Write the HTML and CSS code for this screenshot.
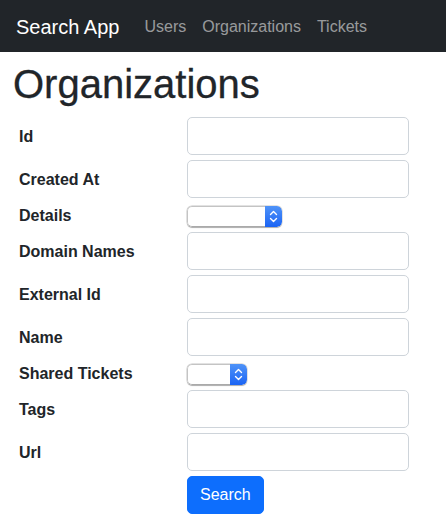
FILE: index.html
```html
<!DOCTYPE html>
<html lang="en">
<head>
<meta charset="utf-8">
<title>Search App</title>
<link rel="stylesheet" href="styles.css">
</head>
<body>
<nav class="navbar">
  <a class="brand" href="#">Search App</a>
  <ul class="nav">
    <li><a class="nav-link" href="#">Users</a></li>
    <li><a class="nav-link" href="#">Organizations</a></li>
    <li><a class="nav-link" href="#">Tickets</a></li>
  </ul>
</nav>
<main class="main">
  <h1 class="title">Organizations</h1>
  <form class="form">
    <label class="label" for="f-id">Id</label>
    <input class="input" id="f-id" type="text">

    <label class="label" for="f-created">Created At</label>
    <input class="input" id="f-created" type="text">

    <label class="label label-short" for="f-details">Details</label>
    <div class="select select-wide">
      <select class="select-field" id="f-details"><option></option></select>
      <span class="stepper"><svg width="9" height="13" viewBox="0 0 9 13"><path d="M1.5 4.5 L4.5 1.5 L7.5 4.5 M1.5 8.5 L4.5 11.5 L7.5 8.5" fill="none" stroke="#fff" stroke-width="1.4" stroke-linecap="round" stroke-linejoin="round"/></svg></span>
    </div>

    <label class="label" for="f-domain">Domain Names</label>
    <input class="input" id="f-domain" type="text">

    <label class="label" for="f-ext">External Id</label>
    <input class="input" id="f-ext" type="text">

    <label class="label" for="f-name">Name</label>
    <input class="input" id="f-name" type="text">

    <label class="label label-short" for="f-shared">Shared Tickets</label>
    <div class="select select-narrow">
      <select class="select-field" id="f-shared"><option></option></select>
      <span class="stepper"><svg width="9" height="13" viewBox="0 0 9 13"><path d="M1.5 4.5 L4.5 1.5 L7.5 4.5 M1.5 8.5 L4.5 11.5 L7.5 8.5" fill="none" stroke="#fff" stroke-width="1.4" stroke-linecap="round" stroke-linejoin="round"/></svg></span>
    </div>

    <label class="label" for="f-tags">Tags</label>
    <input class="input" id="f-tags" type="text">

    <label class="label" for="f-url">Url</label>
    <input class="input" id="f-url" type="text">

    <span></span>
    <div class="actions"><button class="btn" type="submit">Search</button></div>
  </form>
</main>
</body>
</html>
```
FILE: styles.css
```css
* { box-sizing: border-box; }
html, body { margin: 0; padding: 0; }
body {
  font-family: "Liberation Sans", Arial, sans-serif;
  font-size: 16px;
  color: #212529;
  background: #fff;
}
.navbar {
  height: 52px;
  background: #212529;
  display: flex;
  align-items: center;
  padding: 2px 16px 0;
}
.brand {
  color: #fff;
  text-decoration: none;
  font-size: 20px;
  margin-right: 17px;
}
.nav {
  list-style: none;
  margin: 0;
  padding: 0;
  display: flex;
}
.nav-link {
  display: block;
  padding: 0 8px;
  color: rgba(255, 255, 255, 0.55);
  text-decoration: none;
  font-size: 16px;
}
.main {
  padding: 0 13px;
}
.title {
  font-size: 40px;
  font-weight: 500;
  line-height: 48px;
  margin: 8px 0 9px;
  -webkit-text-stroke: 0.3px #212529;
}
.form {
  display: grid;
  grid-template-columns: 168px 222px;
  row-gap: 5px;
  padding-left: 6px;
}
.label {
  font-weight: bold;
  align-self: center;
  line-height: 22px;
  padding-top: 2px;
}
.input {
  height: 38px;
  width: 222px;
  border: 1px solid #ced4da;
  border-radius: 5px;
  background: #fff;
  font: inherit;
  padding: 6px 12px;
}
.select {
  align-self: end;
  display: flex;
  height: 21px;
  border-radius: 5px;
  box-shadow: 0 0 0 0.5px rgba(0,0,0,0.18), 0 0.5px 1px rgba(0,0,0,0.25);
  overflow: hidden;
}
.select-wide { width: 95px; }
.select-narrow { width: 60px; }
.select-field {
  appearance: none;
  -webkit-appearance: none;
  flex: 1;
  min-width: 0;
  border: 1px solid #c4c4c4;
  border-right: none;
  border-bottom-color: #aaa;
  border-radius: 5px 0 0 5px;
  background: #fff;
  height: 21px;
  margin: 0;
  padding: 0;
  font: inherit;
}
.stepper {
  width: 17px;
  height: 21px;
  background: linear-gradient(#4f93f8, #1b64f4);
  display: flex;
  align-items: center;
  justify-content: center;
  border-radius: 0 5px 5px 0;
}
.stepper svg { display: block; }
.actions { display: flex; }
.btn {
  font: inherit;
  color: #fff;
  background: #0d6efd;
  border: 1px solid #0d6efd;
  border-radius: 5px;
  height: 38px;
  padding: 0 12px;
  cursor: pointer;
}
```
